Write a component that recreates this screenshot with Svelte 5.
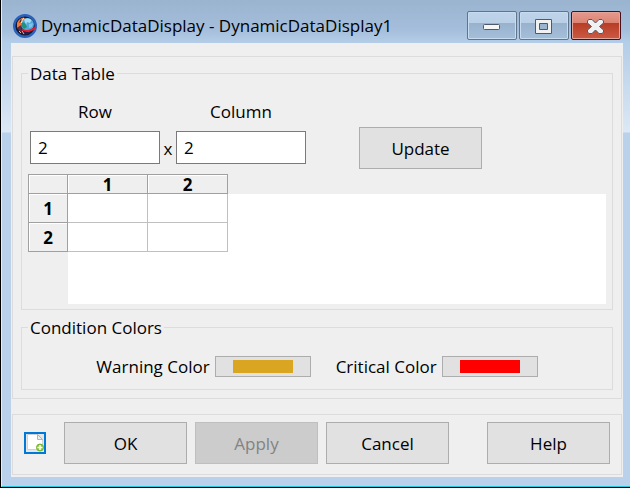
<script>
  let rows = $state(2);
  let columns = $state(2);
  let size = $state({ rows: 2, columns: 2 });
  const range = (n) => Array.from({ length: n }, (_, i) => i + 1);
  const update = () => {
    size = { rows: Number(rows) || 0, columns: Number(columns) || 0 };
  };
  const conditions = [
    { label: 'Warning Color', color: '#daa520' },
    { label: 'Critical Color', color: '#ff0000' }
  ];
</script>

<div class="window">
  <header>
    <svg class="logo" viewBox="0 0 24 24" aria-hidden="true">
      <circle cx="12" cy="12" r="10.8" fill="#141a30" stroke="#2a62bc" stroke-width="2.4" />
      <path d="M4 9 Q6 4 11 3.500 L12 5 L9 8 L8 12 L4 14Z" fill="#f07a3c" />
      <path d="M8 5 L9 7 L6 9Z" fill="#2a2030" />
      <path d="M4 14 L8 11 L9 17 L7 18Z" fill="#5c2c4c" />
      <circle cx="14.500" cy="10.500" r="6.500" fill="#4fa8dc" />
      <path d="M11 5.500 Q15 3 18.500 6 L17 9 L14 8 L13 11Z" fill="#a4dcf4" />
      <path d="M16 10 L20 9 L19 13 L16 14Z" fill="#7cc4ea" />
      <path d="M9 8 L12 9 L14 13 L11 15 L8.500 12Z" fill="#22907c" />
      <path d="M11 4 Q8.500 6 8.500 9" fill="none" stroke="#e8f4f8" stroke-width="1" />
      <path d="M8 17 Q13 19 18 17 L16 20 Q12 21.500 8 20Z" fill="#2a1c48" />
      <path d="M6 17 L8 19 M9 17 L11 20" stroke="#e8b8a0" stroke-width="1" />
      <path d="M9 15.500 Q13 18 17 16.500 T23 13" fill="none" stroke="#e81c30" stroke-width="2" />
    </svg>
    <h1>DynamicDataDisplay - DynamicDataDisplay1</h1>
    <div class="controls">
      <button type="button" aria-label="Minimize">
        <svg viewBox="0 0 24 18"><rect x="3.500" y="7.500" width="16" height="5" rx="1" fill="#f5f5f5" stroke="#50586c" /></svg>
      </button>
      <button type="button" aria-label="Maximize">
        <svg viewBox="0 0 24 18"><path d="M3.500 2.500H19.500V16.500H3.500ZM7.500 6.500V12.500H15.500V6.500Z" fill="#f1f1f1" stroke="#50586c" fill-rule="evenodd" /></svg>
      </button>
      <button type="button" class="close" aria-label="Close">
        <svg viewBox="0 0 24 18">
          <path d="M3.500 3.500L5 2.500H8L11.500 6L15 2.500H18L19.500 4V6L15.500 9.500L19.500 13V15L18 16.500H15L11.500 13L8 16.500H5L3.500 15V13L7.500 9.500L3.500 6Z" fill="#f1f1f1" stroke="#50586c" />
        </svg>
      </button>
    </div>
  </header>

  <main>
    <section class="panel settings">
      <fieldset>
        <legend>Data Table</legend>
        <div class="dimensions">
          <label class="row-label" for="rows">Row</label>
          <label class="column-label" for="columns">Column</label>
          <input id="rows" type="text" bind:value={rows} />
          <span class="times">x</span>
          <input id="columns" type="text" bind:value={columns} />
          <button type="button" class="push update" onclick={update}>Update</button>
        </div>
        <div class="viewport">
          <table>
            <thead>
              <tr>
                <td class="corner"></td>
                {#each range(size.columns) as c}<th scope="col">{c}</th>{/each}
              </tr>
            </thead>
            <tbody>
              {#each range(size.rows) as r}
                <tr>
                  <th scope="row">{r}</th>
                  {#each range(size.columns) as c}<td></td>{/each}
                </tr>
              {/each}
            </tbody>
          </table>
        </div>
      </fieldset>

      <fieldset>
        <legend>Condition Colors</legend>
        <div class="conditions">
          {#each conditions as item, i}
            <div class="condition">
              <label for="condition-{i}">{item.label}</label>
              <button type="button" id="condition-{i}" class="swatch">
                <span style="background: {item.color}"></span>
              </button>
            </div>
          {/each}
        </div>
      </fieldset>
    </section>

    <footer class="panel actions">
      <button type="button" class="new" aria-label="New">
        <svg viewBox="0 0 18 18">
          <path d="M1.500 .500H12L16.500 5.500V15.500H1.500Z" fill="#fff" stroke="#d2d2d2" />
          <path d="M11.500 .500V5.500H16.500Z" fill="#eee" stroke="#b4b4b4" />
          <circle cx="14" cy="13.500" r="3.500" fill="#8cc63f" stroke="#74b52c" />
          <path d="M14 11V16M11.500 13.500H16.500" stroke="#fff" stroke-width="1.500" />
        </svg>
      </button>
      <div class="group">
        <button type="button" class="push">OK</button>
        <button type="button" class="push" disabled>Apply</button>
        <button type="button" class="push">Cancel</button>
      </div>
      <button type="button" class="push help">Help</button>
    </footer>
  </main>
</div>

<style>
  :global(body) {
    margin: 0;
    background: #000;
  }
  .window,
  .window * {
    box-sizing: border-box;
  }
  .window {
    margin: 0 0 1px 1px;
    padding: 0 7px 9px 9px;
    border-left: 1px solid #e4eef8;
    border-bottom: 1px solid #28c8dc;
    background: linear-gradient(#9ab4d0, #a5bedb 30px, #b4cde8 43px, #dce8f5 132px, #b9d1ea 133px);
    color: #000;
    font: 17px/25px "Open Sans", "Noto Sans", sans-serif;
  }
  button,
  input {
    font: inherit;
    color: inherit;
  }
  header {
    display: flex;
    align-items: center;
    gap: 4px;
    height: 43px;
    padding: 8px 2px 0;
  }
  .logo {
    flex: none;
    width: 24px;
    height: 24px;
  }
  h1 {
    flex: 1;
    margin: 0;
    font-size: 17px;
    font-weight: 400;
    line-height: 25px;
    white-space: nowrap;
  }
  .controls {
    display: flex;
    gap: 2px;
  }
  .controls button {
    display: grid;
    place-items: center;
    width: 50px;
    height: 29px;
    padding: 0;
    border: 1px solid #60748c;
    border-radius: 2px;
    background: linear-gradient(#bfd4ea, #b9cfe6 40%, #98b1cd 40%, #a5bfdb);
    box-shadow: inset 0 0 0 1px #c8dcf0;
  }
  .controls .close {
    border-color: #46101c;
    background: linear-gradient(#e49a8c, #dc8474 40%, #b83c24 40%, #cc5a44);
    box-shadow: inset 0 0 0 1px #e4a498;
  }
  .controls svg {
    width: 24px;
    height: 18px;
  }
  main {
    padding: 13px 1px 2px;
    background: #efefef;
  }
  .panel {
    border: 1px solid #dcdcdc;
  }
  .settings {
    display: grid;
    gap: 5px;
    padding: 4px 8px 8px;
  }
  fieldset {
    min-width: 0;
    margin: 0;
    padding: 13px 6px 5px;
    border: 1px solid #dcdcdc;
  }
  legend {
    padding: 0 2px;
  }
  .dimensions {
    display: grid;
    grid-template-columns: 130px 16px 130px 53px 123px;
    grid-template-rows: 25px 42px;
    row-gap: 3px;
    padding-left: 2px;
  }
  .dimensions label {
    text-align: center;
  }
  .column-label {
    grid-column: 3;
  }
  .dimensions input {
    grid-row: 2;
    width: 130px;
    height: 33px;
    margin: 4px 0;
    padding: 0 7px;
    border: 1px solid #7a7a7a;
    border-radius: 0;
    background: #fff;
  }
  .times {
    grid-row: 2;
    align-self: center;
    text-align: center;
  }
  .update {
    grid-area: 2 / 5;
  }
  .push {
    width: 123px;
    height: 42px;
    padding: 0;
    border: 1px solid #adadad;
    border-radius: 0;
    background: #e1e1e1;
  }
  .push:disabled {
    border-color: #bfbfbf;
    background: #ccc;
    color: #838383;
  }
  .viewport {
    min-height: 130px;
    margin-top: 5px;
    background: linear-gradient(#fff, #fff) 40px 20px no-repeat;
  }
  table {
    width: 200px;
    table-layout: fixed;
    border-collapse: separate;
    border-spacing: 0;
    border-top: 1px solid #a0a0a0;
    border-left: 1px solid #a0a0a0;
  }
  th,
  td {
    width: 80px;
    height: 29px;
    padding: 2px 0 0;
    border-right: 1px solid #c0c0c0;
    border-bottom: 1px solid #c0c0c0;
    background: #fff;
    font-weight: 700;
    line-height: 16px;
  }
  th,
  .corner {
    border-color: #a0a0a0;
    background: #efefef;
    box-shadow: inset 1px 1px #fff;
  }
  thead th,
  .corner {
    height: 19px;
  }
  .corner {
    width: 39px;
  }
  .conditions {
    display: flex;
    justify-content: center;
    gap: 25px;
    padding: 1px 0 5px;
  }
  .condition {
    display: flex;
    align-items: center;
    gap: 5px;
  }
  .swatch {
    display: flex;
    justify-content: center;
    width: 96px;
    height: 21px;
    padding: 3px 0;
    border: 1px solid #adadad;
    border-radius: 0;
    background: #e1e1e1;
  }
  .swatch span {
    width: 60px;
    height: 13px;
  }
  .actions {
    display: flex;
    align-items: center;
    margin-top: 15px;
    padding: 7px 11px 10px;
  }
  .new {
    width: 22px;
    height: 22px;
    margin-right: 18px;
    padding: 0;
    border: 2px solid #0078d7;
    border-radius: 0;
    background: #e6e6e6;
  }
  .new svg {
    display: block;
    width: 18px;
    height: 18px;
  }
  .group {
    display: flex;
    gap: 8px;
  }
  .help {
    margin-left: auto;
  }
</style>
